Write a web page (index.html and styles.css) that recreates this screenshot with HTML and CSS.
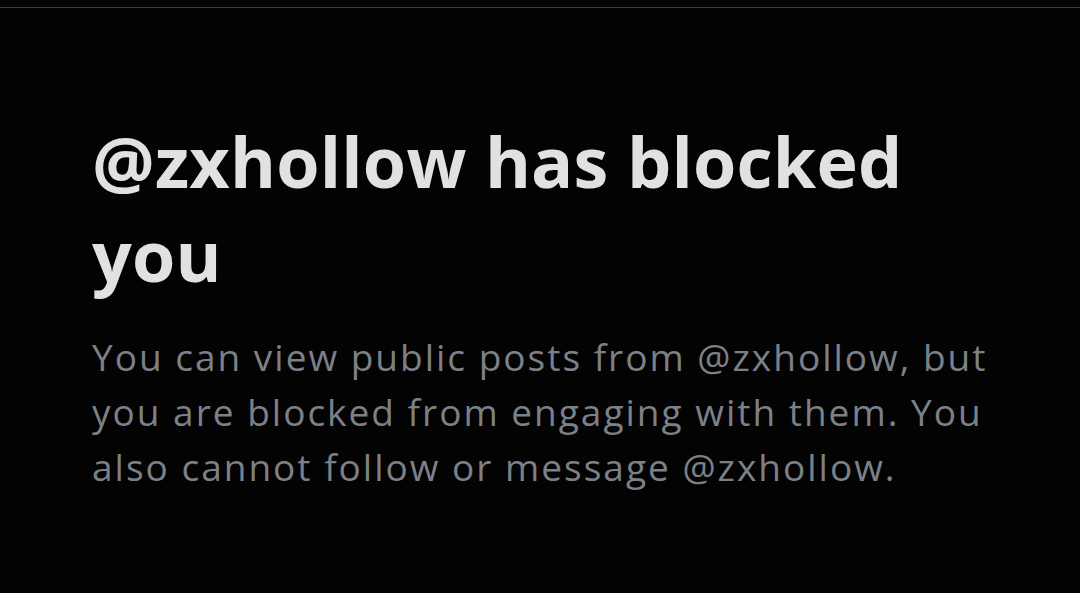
FILE: index.html
```html
<!DOCTYPE html>
<html lang="en">
<head>
<meta charset="utf-8">
<title>Blocked</title>
<link rel="stylesheet" href="styles.css">
</head>
<body>
  <div class="topline"></div>
  <main class="notice">
    <h1 class="title">@zxhollow has blocked you</h1>
    <p class="desc">You can view public posts from @zxhollow, but you are blocked from engaging with them. You also cannot follow or message @zxhollow.</p>
  </main>
</body>
</html>
```

FILE: styles.css
```css
html, body {
  margin: 0;
  padding: 0;
  background: #030303;
  height: 100%;
}
body {
  padding-top: 7px;
  box-sizing: border-box;
  font-family: "Open Sans", "Noto Sans", sans-serif;
}
.topline {
  height: 1px;
  background: #3c3c3c;
}
.notice {
  padding: 106px 60px 0 92px;
}
.title {
  margin: 0;
  color: #e1e1e1;
  font-weight: 700;
  font-size: 70px;
  line-height: 94px;
  letter-spacing: 0.2px;
  max-width: 880px;
}
.desc {
  margin: 27px 0 0;
  color: #7c8087;
  font-size: 37px;
  line-height: 55px;
  letter-spacing: 2px;
  width: 910px;
}
```
